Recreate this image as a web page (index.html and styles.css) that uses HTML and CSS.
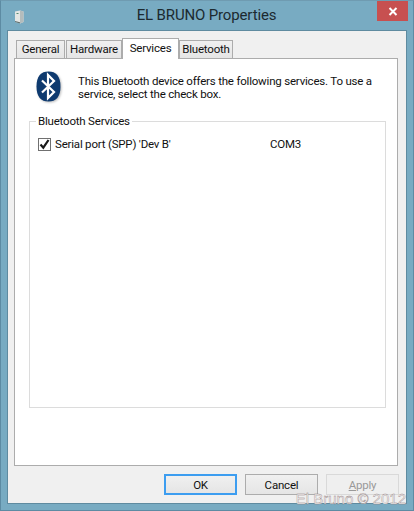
FILE: index.html
```html
<!DOCTYPE html>
<html lang="en">
<head>
    <meta charset="UTF-8">
    <title>EL BRUNO Properties</title>
    <link rel="stylesheet" href="styles.css">
</head>
<body>
    <div class="window">
        <div class="titlebar">
            <svg class="app-icon" width="10" height="14" viewBox="0 0 10 14">
                <path d="M1 1.5 L6 0.5 L9.5 1.5 V12 L6 13.5 L1 12 Z" fill="#e4e6e4"/>
                <path d="M6 0.5 L9.5 1.5 V12 L6 13.5 Z" fill="#b4bcbc"/>
                <path d="M1 12 L6 13.5 V12.2 L1 11 Z" fill="#5f6f70"/>
                <rect x="2.5" y="3" width="2" height="1" fill="#5a8a70"/>
            </svg>
            <h1 class="title">EL BRUNO Properties</h1>
            <button class="close">
                <svg width="10" height="9" viewBox="0 0 10 9">
                    <path d="M1.5 1 L8.5 8 M8.5 1 L1.5 8" stroke="#fff" stroke-width="2"/>
                </svg>
            </button>
        </div>
        <div class="client">
            <ul class="tabs">
                <li class="tab tab-general">General</li>
                <li class="tab tab-hardware">Hardware</li>
                <li class="tab active">Services</li>
                <li class="tab tab-bluetooth">Bluetooth</li>
            </ul>
            <div class="panel">
                <div class="intro">
                    <svg class="bt-icon" width="25" height="31" viewBox="0 0 25 31">
                        <path d="M12.5 0.5 C20 0.5 24.5 5 24.5 15.5 C24.5 26 20 30.5 12.5 30.5 C5 30.5 0.5 26 0.5 15.5 C0.5 5 5 0.5 12.5 0.5 Z" fill="#0e3a6f"/>
                        <path d="M6 9.5 L18 21 L12 27 V4 L18 10 L6 21.5" fill="none" stroke="#fff" stroke-width="2.2"/>
                    </svg>
                    <p class="intro-text">This Bluetooth device offers the following services. To use a service, select the check box.</p>
                </div>
                <fieldset class="group">
                    <legend>Bluetooth Services</legend>
                    <div class="service">
                        <span class="checkbox">
                            <svg width="11" height="11" viewBox="0 0 11 11">
                                <path d="M1.5 5.5 L4.3 8.7 L9.5 1" fill="none" stroke="#1a1a1a" stroke-width="2.2"/>
                            </svg>
                        </span>
                        <span class="service-name">Serial port (SPP) 'Dev B'</span>
                        <span class="service-port">COM3</span>
                    </div>
                </fieldset>
            </div>
            <div class="buttons">
                <button class="btn default">OK</button>
                <button class="btn">Cancel</button>
                <button class="btn disabled"><u>A</u>pply</button>
            </div>
        </div>
        <div class="watermark">El Bruno © 2012</div>
    </div>
</body>
</html>
```

FILE: styles.css
```css
* {
    margin: 0;
    padding: 0;
    box-sizing: border-box;
}

html, body {
    height: 100%;
}

body {
    font-family: Roboto, 'Liberation Sans', sans-serif;
    font-size: 11.5px;
    letter-spacing: -0.2px;
    color: #111;
    overflow: hidden;
}

.window {
    position: relative;
    width: 414px;
    height: 511px;
    display: flex;
    flex-direction: column;
    background: #78abc2;
    border: 1px solid #5d8ba3;
    border-top-color: #6f9bb1;
}

.titlebar {
    height: 29px;
    flex: none;
    display: flex;
    align-items: flex-start;
    position: relative;
}

.app-icon {
    margin: 9px 0 0 13px;
}

.title {
    position: absolute;
    left: 0;
    right: 1px;
    top: 4px;
    text-align: center;
    font-size: 15px;
    font-weight: 400;
    letter-spacing: -0.15px;
    line-height: 20px;
    color: #1c2a30;
}

.close {
    position: absolute;
    top: 0;
    right: 5px;
    width: 31px;
    height: 20px;
    border: none;
    background: #c75050;
    display: flex;
    align-items: center;
    justify-content: center;
}

.client {
    flex: none;
    height: 474px;
    margin: 0 6px;
    padding: 7px 8px 0 6px;
    background: #f0f0f0;
    border: 1px solid #5f8ba0;
    display: flex;
    flex-direction: column;
}

.tabs {
    list-style: none;
    display: flex;
    align-items: flex-end;
    height: 21px;
    margin-bottom: -1px;
    padding-left: 2px;
    position: relative;
    z-index: 1;
}

.tab {
    height: 18px;
    line-height: 17px;
    text-align: center;
    margin-bottom: 1px;
    margin-right: 1px;
    background: linear-gradient(#f0f0f0, #e5e5e5);
    border: 1px solid #acacac;
    border-bottom: none;
    white-space: nowrap;
}

.tab-general {
    width: 49px;
}

.tab-hardware {
    width: 56px;
}

.tab-bluetooth {
    width: 54px;
}

.tab.active {
    width: 57px;
    height: 21px;
    line-height: 18px;
    margin: 0 0 0 -1px;
    background: #fff;
    border-bottom: none;
}

.panel {
    height: 408px;
    flex: none;
    background: #fff;
    border: 1px solid #acacac;
    display: flex;
    flex-direction: column;
}

.intro {
    display: flex;
    padding: 12px 20px 0 21px;
    height: 54px;
}

.bt-icon {
    flex: none;
    filter: drop-shadow(1px 1px 1px rgba(0, 0, 0, 0.25));
}

.intro-text {
    margin: 4px 0 0 17px;
    line-height: 13px;
}

.group {
    margin: 0 11px 0 14px;
    height: 295px;
    border: 1px solid #dcdcdc;
}

.group legend {
    margin-left: 6px;
    padding: 0 2px;
    line-height: 16px;
}

.service {
    display: flex;
    align-items: center;
    padding: 8px 0 0 8px;
}

.checkbox {
    width: 13px;
    height: 13px;
    flex: none;
    border: 1px solid #707070;
    background: #fff;
    display: flex;
    align-items: center;
    justify-content: center;
}

.service-name {
    margin-left: 4px;
    width: 215px;
}

.buttons {
    display: flex;
    justify-content: flex-end;
    gap: 8px;
    margin-top: 8px;
    margin-right: -1px;
}

.btn {
    width: 73px;
    height: 21px;
    font-family: inherit;
    font-size: 11.5px;
    letter-spacing: -0.2px;
    color: #111;
    background: linear-gradient(#f0f0f0, #e5e5e5);
    border: 1px solid #acacac;
}

.btn.default {
    border: 2px solid #3c9df0;
}

.btn.disabled {
    color: #999;
    background: #efefef;
    border-color: #d9d9d9;
}

.watermark {
    position: absolute;
    right: 7px;
    bottom: 3px;
    font-family: 'Liberation Sans', sans-serif;
    font-size: 15px;
    letter-spacing: 0;
    line-height: 16px;
    color: #f6f4f4;
    -webkit-text-stroke: 0.35px #8f7c7c;
    white-space: nowrap;
}
```
